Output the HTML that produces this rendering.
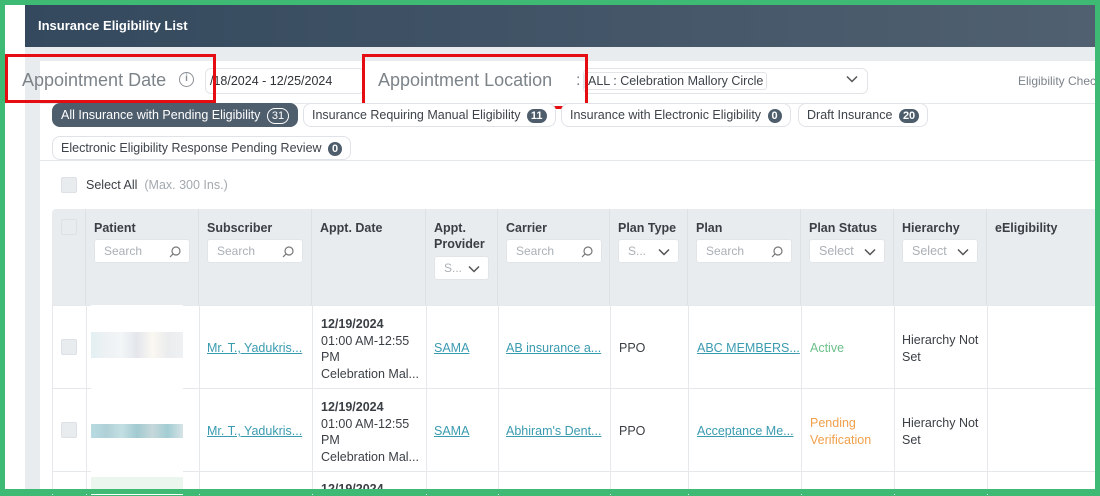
<!DOCTYPE html>
<html><head><meta charset="utf-8"><style>
*{margin:0;padding:0;box-sizing:border-box}
body{width:1100px;height:494px;overflow:hidden;background:#3fba74;font-family:"Liberation Sans",sans-serif;font-size:12px;color:#3a3f45;position:relative}
.a{position:absolute}
.frame{left:5px;top:5px;width:1090px;height:484px;background:#fff;overflow:hidden}
.t{white-space:nowrap}
.pill{position:absolute;height:24px;border:1px solid #dfe3e7;border-radius:8px;background:#fff;padding:0 8px;line-height:22px;white-space:nowrap;color:#3d434a;font-size:12.5px}
.badge{display:inline-block;background:#4e5d6c;color:#fff;border-radius:9px;padding:0 4px;font-size:11px;line-height:14px;margin-left:3px;font-weight:bold}
.th{position:absolute;top:209px;height:96px;background:#e9ecef;border-right:1px solid #dde1e5}
.th b{position:absolute;left:8px;top:11px;font-size:12.5px;color:#3a3f45;line-height:16px}
.inp{position:absolute;height:24px;background:#fff;border:1px solid #e2e5e8;border-radius:3px;color:#aab0b6;font-size:12px;line-height:22px;padding-left:9px}
.inp svg{position:absolute;right:8px;top:6px}
.vl{position:absolute;top:305px;width:1px;height:190px;background:#e6e9ec}
.hl{position:absolute;left:52px;width:1050px;height:1px;background:#e6e9ec}
.lk{color:#3a9bb0;text-decoration:underline;position:absolute;white-space:nowrap;font-size:12.5px}
.cb{position:absolute;width:16px;height:16px;border:1px solid #dde1e5;background:#e9ecef;border-radius:2px}
.red{position:absolute;border:3px solid #e60d12}
.c{font-size:12.5px}
</style></head><body>
<svg width="0" height="0" style="position:absolute"><defs>
<symbol id="s" viewBox="0 0 12 12"><circle cx="7" cy="5" r="4" fill="none" stroke="#777" stroke-width="1.2"/><path d="M4.2 7.8L1 11" stroke="#777" stroke-width="1.2"/></symbol>
<symbol id="v" viewBox="0 0 12 12"><path d="M1 3.5l5 5 5-5" fill="none" stroke="#555" stroke-width="1.5"/></symbol>
</defs></svg>
<div class="a frame"></div>
<div class="a" style="left:25px;top:5px;width:1070px;height:42px;background:linear-gradient(90deg,#34495e,#506070)"></div>
<div class="a t" style="left:38px;top:18px;color:#fff;font-weight:bold;font-size:13px">Insurance Eligibility List</div>
<div class="a" style="left:25px;top:47px;width:15px;height:447px;background:#e9ecef"></div>
<div class="a" style="left:25px;top:47px;width:1070px;height:14px;background:#e9ecef"></div>
<div class="a" style="left:40px;top:103px;width:1055px;height:1px;background:#e6e9ec"></div>
<div class="a" style="left:40px;top:160px;width:1055px;height:1px;background:#e6e9ec"></div>
<div class="a t" style="left:22px;top:70px;font-size:18px;color:#7c8389">Appointment Date</div>
<div class="a" style="left:179px;top:72px;width:15px;height:15px;border:1.5px solid #8a9096;border-radius:50%;font-size:10px;text-align:center;line-height:12px;color:#8a9096;font-weight:bold">i</div>
<div class="a" style="left:205px;top:68px;width:160px;height:26px;border:1px solid #e2e5e8;border-radius:6px"></div>
<div class="a t" style="left:210px;top:74px;font-size:12.5px;color:#2e3338">/18/2024 - 12/25/2024</div>
<div class="a t" style="left:378px;top:70px;font-size:18px;color:#7c8389">Appointment Location</div>
<div class="a t" style="left:576px;top:72px;font-size:16px;color:#7c8389">:</div>
<div class="a" style="left:583px;top:68px;width:285px;height:26px;border:1px solid #e2e5e8;border-radius:6px"></div>
<div class="a t" style="left:584px;top:72px;height:18px;padding:0 3px;border:1px solid #e2e5e8;border-radius:3px;line-height:16px;color:#3d434a;font-size:12.5px">ALL : Celebration Mallory Circle</div>
<svg class="a" style="left:846px;top:73px" width="12" height="12"><use href="#v"/></svg>
<div class="a t" style="left:1018px;top:74px;color:#7c8389">Eligibility Chec</div>
<div class="red" style="left:5px;top:54px;width:211px;height:49px"></div>
<div class="red" style="left:362px;top:54px;width:226px;height:55px"></div>
<div class="pill" style="left:52px;top:103px;background:#4f5e6d;color:#fff;border-color:#4f5e6d">All Insurance with Pending Eligibility <span class="badge" style="background:none;border:1px solid #fff;font-weight:normal">31</span></div>
<div class="pill" style="left:303px;top:103px">Insurance Requiring Manual Eligibility <span class="badge">11</span></div>
<div class="pill" style="left:561px;top:103px">Insurance with Electronic Eligibility <span class="badge">0</span></div>
<div class="pill" style="left:798px;top:103px">Draft Insurance <span class="badge">20</span></div>
<div class="pill" style="left:52px;top:136px">Electronic Eligibility Response Pending Review <span class="badge">0</span></div>
<div class="cb" style="left:61px;top:177px"></div>
<div class="a t c" style="left:86px;top:178px;color:#3a3f45">Select All <span style="color:#a3a9ae">&nbsp;(Max. 300 Ins.)</span></div>
<div class="th" style="left:52px;width:34px;border-radius:4px 0 0 0"><div class="cb" style="left:9px;top:10px;background:#e9ecef"></div></div>
<div class="th" style="left:86px;width:113px"><b>Patient</b><div class="inp" style="left:8px;top:30px;width:96px">Search<svg width="12" height="12"><use href="#s"/></svg></div></div>
<div class="th" style="left:199px;width:113px"><b>Subscriber</b><div class="inp" style="left:8px;top:30px;width:96px">Search<svg width="12" height="12"><use href="#s"/></svg></div></div>
<div class="th" style="left:312px;width:114px"><b>Appt. Date</b></div>
<div class="th" style="left:426px;width:72px"><b>Appt.<br>Provider</b><div class="inp" style="left:8px;top:47px;width:55px">S...<svg width="12" height="12"><use href="#v"/></svg></div></div>
<div class="th" style="left:498px;width:112px"><b>Carrier</b><div class="inp" style="left:8px;top:30px;width:96px">Search<svg width="12" height="12"><use href="#s"/></svg></div></div>
<div class="th" style="left:610px;width:78px"><b>Plan Type</b><div class="inp" style="left:8px;top:30px;width:61px">S...<svg width="12" height="12"><use href="#v"/></svg></div></div>
<div class="th" style="left:688px;width:113px"><b>Plan</b><div class="inp" style="left:8px;top:30px;width:96px">Search<svg width="12" height="12"><use href="#s"/></svg></div></div>
<div class="th" style="left:801px;width:93px"><b>Plan Status</b><div class="inp" style="left:8px;top:30px;width:76px;font-size:12.5px">Select<svg width="12" height="12"><use href="#v"/></svg></div></div>
<div class="th" style="left:894px;width:93px"><b>Hierarchy</b><div class="inp" style="left:8px;top:30px;width:76px;font-size:12.5px">Select<svg width="12" height="12"><use href="#v"/></svg></div></div>
<div class="th" style="left:987px;width:115px;border:none"><b>eEligibility</b></div>
<div class="vl" style="left:52px"></div><div class="vl" style="left:86px"></div><div class="vl" style="left:199px"></div><div class="vl" style="left:312px"></div><div class="vl" style="left:426px"></div><div class="vl" style="left:498px"></div><div class="vl" style="left:610px"></div><div class="vl" style="left:688px"></div><div class="vl" style="left:801px"></div><div class="vl" style="left:894px"></div><div class="vl" style="left:987px"></div>
<div class="hl" style="top:305px"></div><div class="hl" style="top:388px"></div><div class="hl" style="top:471px"></div>
<div class="a" style="left:91px;top:305px;width:92px;height:190px;background:#fff"></div>
<div class="cb" style="left:61px;top:339px"></div>
<div class="a" style="left:91px;top:332px;width:92px;height:26px;background:linear-gradient(90deg,#e3f0f3,#eef1f3,#f3f6f7,#e3e6ec,#fbf8f2,#ebeced,#eef1f3)"></div>
<div class="lk" style="left:207px;top:341px">Mr. T., Yadukris...</div>
<div class="a c" style="left:321px;top:316px;line-height:16.5px;white-space:nowrap"><b>12/19/2024</b><br>01:00 AM-12:55<br>PM<br>Celebration Mal...</div>
<div class="lk" style="left:434px;top:341px">SAMA</div>
<div class="lk" style="left:506px;top:341px">AB insurance a...</div>
<div class="a t c" style="left:619px;top:341px">PPO</div>
<div class="lk" style="left:697px;top:341px">ABC MEMBERS...</div>
<div class="a t c" style="left:810px;top:341px;color:#6cc08a">Active</div>
<div class="a c" style="left:902px;top:332px;line-height:16.5px">Hierarchy Not<br>Set</div>
<div class="cb" style="left:61px;top:422px"></div>
<div class="a" style="left:91px;top:424px;width:92px;height:14px;background:linear-gradient(90deg,#b8dbe2,#afd0d6,#c3dfe4,#a1cad0,#c6d8db,#a2cdd3,#d6e3e7)"></div>
<div class="lk" style="left:207px;top:424px">Mr. T., Yadukris...</div>
<div class="a c" style="left:321px;top:399px;line-height:16.5px;white-space:nowrap"><b>12/19/2024</b><br>01:00 AM-12:55<br>PM<br>Celebration Mal...</div>
<div class="lk" style="left:434px;top:424px">SAMA</div>
<div class="lk" style="left:506px;top:424px">Abhiram's Dent...</div>
<div class="a t c" style="left:619px;top:424px">PPO</div>
<div class="lk" style="left:697px;top:424px">Acceptance Me...</div>
<div class="a c" style="left:810px;top:415px;line-height:16.5px;color:#f0a04b">Pending<br>Verification</div>
<div class="a c" style="left:902px;top:415px;line-height:16.5px">Hierarchy Not<br>Set</div>
<div class="a" style="left:91px;top:477px;width:92px;height:14px;background:#eaf6ee"></div>
<div class="a t c" style="left:321px;top:482px;font-weight:bold">12/19/2024</div>
<div class="a" style="left:0;top:0;width:1100px;height:5px;background:#3fba74"></div>
<div class="a" style="left:0;top:489px;width:1100px;height:5px;background:#3fba74"></div>
<div class="a" style="left:0;top:0;width:5px;height:494px;background:#3fba74"></div>
<div class="a" style="left:1095px;top:0;width:5px;height:494px;background:#3fba74"></div>
</body></html>
